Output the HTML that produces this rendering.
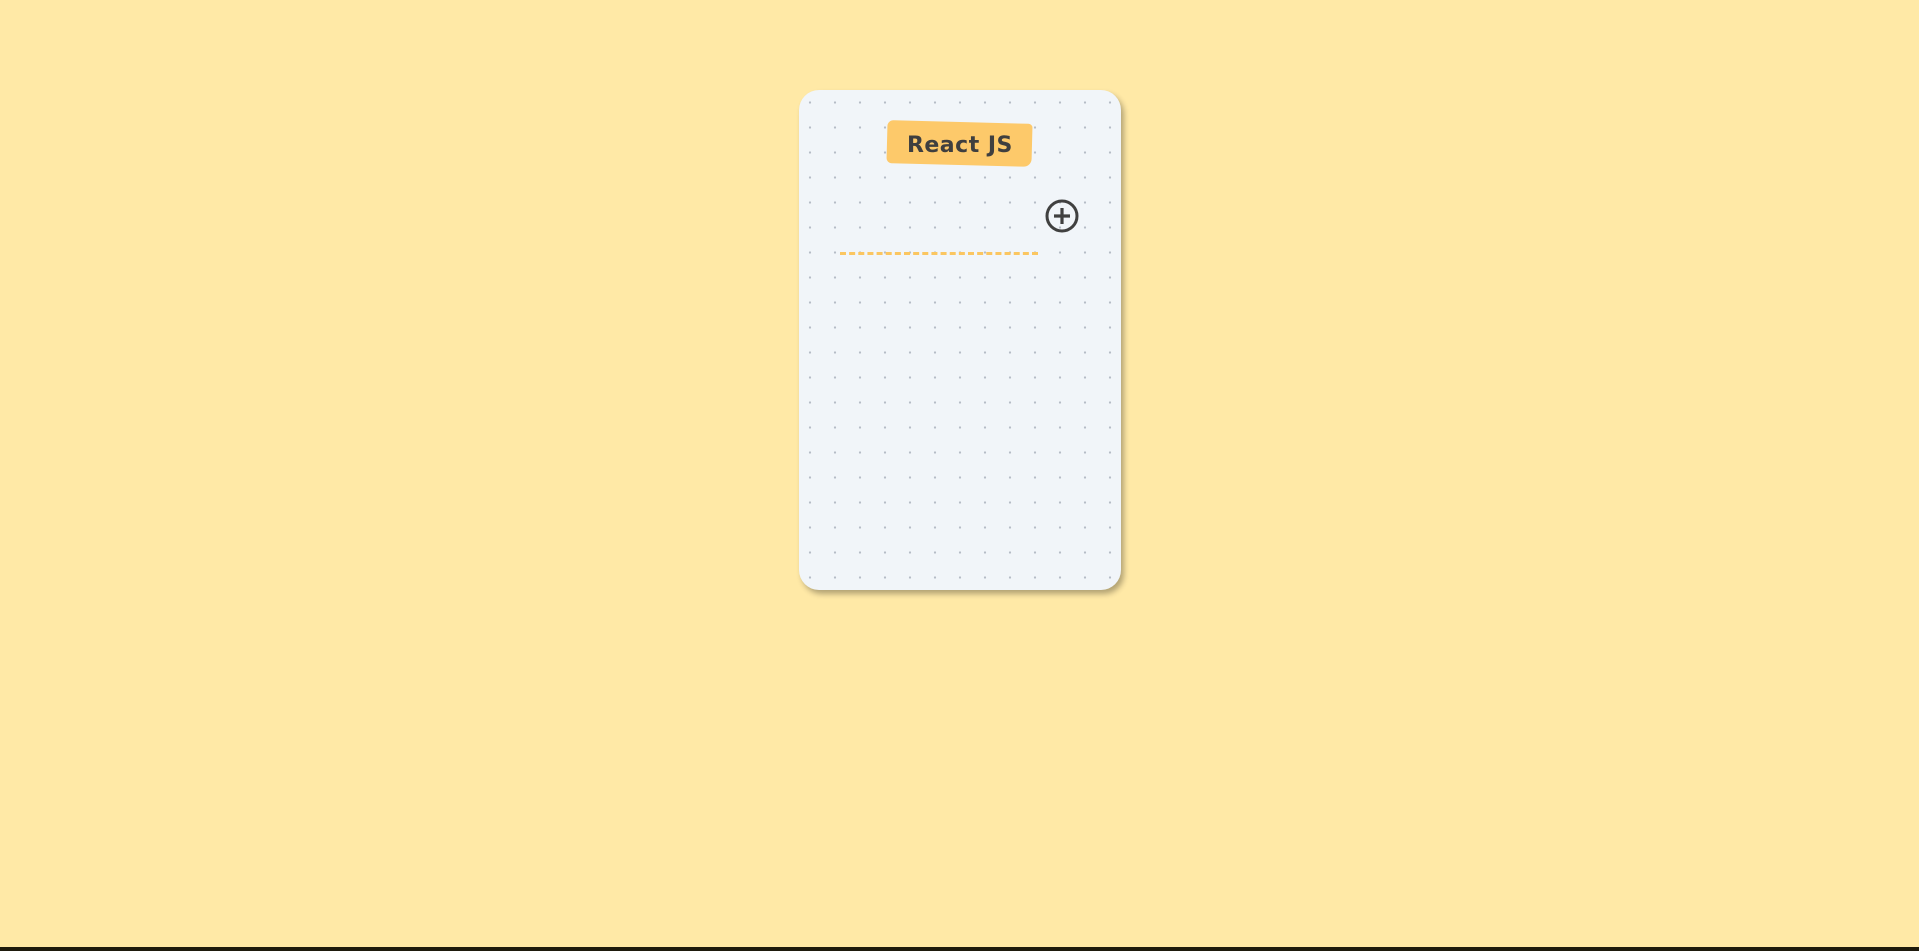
<!DOCTYPE html>
<html><head><style>
html,body{margin:0;padding:0;width:1919px;height:951px;overflow:hidden;background:#ffe9a6;}
.bar{position:absolute;left:0;top:947px;width:1919px;height:4px;background:#1e1a0c;}
.card{position:absolute;left:799px;top:90px;width:322px;height:500px;border-radius:20px;background-color:#f1f5f9;
background-image:radial-gradient(circle,#b5bcc6 1px,transparent 1.3px);background-size:25px 25px;background-position:-1.5px 0px;
box-shadow:3px 4px 6px rgba(0,0,0,0.3);}
.tag{position:absolute;left:88px;top:32px;width:145px;height:43px;background:#fdc96a;border-radius:6px 4px 8px 5px;transform:rotate(1.5deg);
font-family:"Comic Sans MS","DejaVu Sans",sans-serif;font-weight:bold;font-size:22px;color:#3f3f3f;text-align:center;line-height:47px;letter-spacing:0.5px;}
.tag span{display:inline-block;transform:rotate(-1.5deg);}
.line{position:absolute;left:41px;top:162px;width:198px;border-top:3px dashed #fbc661;}
svg{position:absolute;left:245px;top:108px;}
</style></head><body>
<div class="card">
<div class="tag"><span>React JS</span></div>
<svg width="36" height="36" viewBox="0 0 36 36"><circle cx="18" cy="18" r="15" fill="none" stroke="#404040" stroke-width="3"/><path d="M18 10v16M10 18h16" stroke="#404040" stroke-width="3.2"/></svg>
<div class="line"></div>
</div>
<div class="bar"></div>
</body></html>
